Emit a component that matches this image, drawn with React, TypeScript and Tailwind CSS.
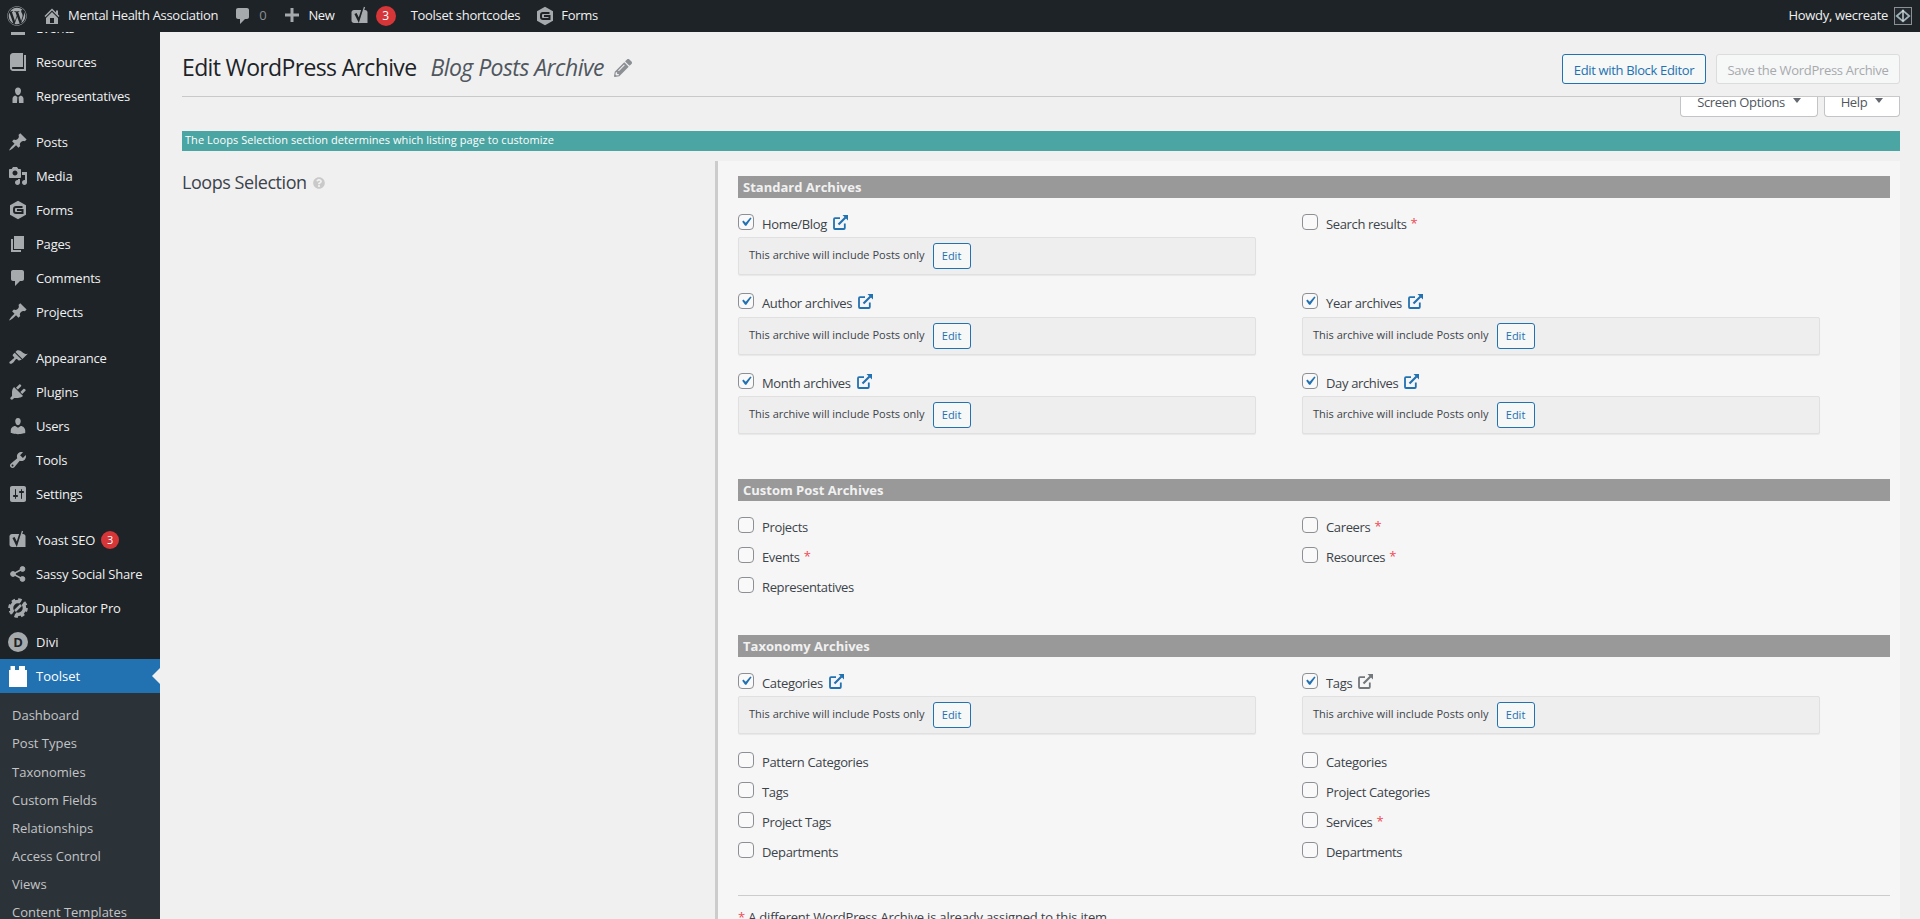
import type { ReactNode } from "react";
import { FaPencilAlt, FaQuestionCircle, FaWordpress } from "react-icons/fa";

type IconProps = { className?: string };

const dash = (d: string) =>
  function DashIcon({ className }: IconProps) {
    return (
      <svg viewBox="0 0 20 20" fill="currentColor" className={className}>
        <path d={d} />
      </svg>
    );
  };

const PinIcon = dash("M10.44 3.02l1.82-1.82 6.36 6.35-1.83 1.82c-1.05-.68-2.48-.57-3.41.36l-.75.75c-.92.93-1.04 2.35-.35 3.41l-1.83 1.82-2.41-2.41-2.8 2.79c-.42.42-3.38 2.71-3.8 2.29s1.86-3.39 2.28-3.81l2.79-2.79L4.1 9.36l1.83-1.82c1.05.69 2.48.57 3.4-.36l.75-.75c.93-.92 1.05-2.35.36-3.41z");
const CommentIcon = dash("M5 2h9c1.1 0 2 .9 2 2v7c0 1.1-.9 2-2 2h-2l-5 5v-5H5c-1.1 0-2-.9-2-2V4c0-1.1.9-2 2-2z");
const UsersIcon = dash("M10 9.25c-2.27 0-2.73-3.44-2.73-3.44C7 4.02 7.82 2 9.97 2c2.16 0 2.98 2.02 2.71 3.81 0 0-.41 3.44-2.68 3.44zm0 2.57L12.72 10c2.39 0 4.52 2.33 4.52 4.53v2.49s-3.65 1.13-7.24 1.13c-3.65 0-7.24-1.13-7.24-1.13v-2.49c0-2.25 1.94-4.48 4.47-4.48z");
const ToolsIcon = dash("M16.68 9.77c-1.34 1.34-3.3 1.67-4.95.99l-5.41 6.52c-.99.99-2.59.99-3.58 0s-.99-2.59 0-3.57l6.52-5.42c-.68-1.65-.35-3.61.99-4.95 1.28-1.28 3.12-1.62 4.72-1.06l-2.89 2.89 2.82 2.82 2.86-2.87c.53 1.58.18 3.39-1.08 4.67zM3.81 16.21c.4.39 1.04.39 1.43 0 .4-.4.4-1.04 0-1.43-.39-.4-1.03-.4-1.43 0-.39.39-.39 1.03 0 1.43z");
const PluginIcon = dash("M13.11 4.36L9.87 7.6 8 5.73l3.24-3.24c.35-.34 1.05-.2 1.56.32.52.51.66 1.21.31 1.55zm-8 1.77l.91-1.12 9.01 9.01-1.19.84c-.71.71-2.63 1.16-3.82 1.16H6.14L4.9 17.26c-.59.59-1.54.59-2.12 0-.59-.58-.59-1.53 0-2.12l1.24-1.24v-3.88c0-1.13.4-3.19 1.09-3.89zm7.26 3.97l3.24-3.24c.34-.35 1.04-.21 1.55.31.52.51.66 1.21.31 1.55l-3.24 3.25z");
const BrushIcon = dash("M14.48 11.06L7.41 3.99l1.5-1.5c.5-.56 2.3-.47 3.51.32 1.21.8 1.43 1.28 2.91 2.1 1.18.64 2.45 1.26 4.45.85zm-.71.71L6.7 4.7 4.93 6.47c-.39.39-.39 1.02 0 1.41l1.06 1.06c.39.39.39 1.03 0 1.42-.6.6-1.43 1.11-2.21 1.69-.35.26-.7.53-1.01.84C1.43 13.23.91 14.6 1.76 15.45s2.21.33 3.55-1.01c.31-.31.58-.66.85-1.02.58-.78 1.08-1.6 1.69-2.21.39-.39 1.02-.39 1.41 0l1.06 1.06c.39.39 1.02.39 1.41 0z");
const HomeIcon = dash("M16 8.5l1.53 1.53-1.06 1.06L10 4.62l-6.47 6.47-1.06-1.06L10 2.5l4 4v-2h2v4zm-6-2.46l6 5.99V18H4v-5.97zM12 17v-5H8v5h4z");
const PageIcon = dash("M6 15V2h10v13H6zm-1 1h8v2H3V5h2v11z");
const MediaIcon = dash("M13 11V4c0-.55-.45-1-1-1h-1.67L9 1H5L3.67 3H2c-.55 0-1 .45-1 1v7c0 .55.45 1 1 1h10c.55 0 1-.45 1-1zM7 4.5c1.38 0 2.5 1.12 2.5 2.5S8.38 9.5 7 9.5 4.5 8.38 4.5 7 5.62 4.5 7 4.5zM14 6h5v10.5c0 1.38-1.12 2.5-2.5 2.5S14 17.88 14 16.5s1.12-2.5 2.5-2.5c.17 0 .34.02.5.05V9h-3V6zm-4 8.05V13h2v3.5c0 1.38-1.12 2.5-2.5 2.5S7 17.88 7 16.5 8.12 14 9.5 14c.17 0 .34.02.5.05z");
const SettingsIcon = dash("M18 16V4c0-1.1-.9-2-2-2H4c-1.1 0-2 .9-2 2v12c0 1.1.9 2 2 2h12c1.1 0 2-.9 2-2zM8 11h1c.55 0 1 .45 1 1s-.45 1-1 1H8v1.5c0 .28-.22.5-.5.5s-.5-.22-.5-.5V13H6c-.55 0-1-.45-1-1s.45-1 1-1h1V5.5c0-.28.22-.5.5-.5s.5.22.5.5V11zm5-2h-1c-.55 0-1-.45-1-1s.45-1 1-1h1V5.5c0-.28.22-.5.5-.5s.5.22.5.5V7h1c.55 0 1 .45 1 1s-.45 1-1 1h-1v5.5c0 .28-.22.5-.5.5s-.5-.22-.5-.5V9z");
const PlusIcon = dash("M17 7.5v3h-5.5V16h-3v-5.5H3v-3h5.5V2h3v5.5H17z");
const BookIcon = dash("M16 3h2v16H5c-1.66 0-3-1.34-3-3V4c0-1.66 1.34-3 3-3h10v14H5c-.55 0-1 .45-1 1s.45 1 1 1h11V3z");
const ManIcon = dash("M10 1.5c1.9 0 3 1.4 3 3.3 0 2.1-1.2 4.4-3 4.4S7 6.900 7 4.800C7 2.900 8.100 1.500 10 1.500zM7.200 9.500L9.400 11l-.4 6H4.500v-4.300c0-1.500 1.100-2.700 2.700-3.200zm5.600 0c1.600.5 2.700 1.700 2.700 3.200V17H11l-.4-6 2.200-1.500z");
const CalendarIcon = dash("M3 5h14v12H3zM5 8v2h2V8zm4 0v2h2V8zm4 0v2h2V8zm-8 4v2h2v-2zm4 0v2h2v-2zm4 0v2h2v-2z");

function YoastIcon({ className }: IconProps) {
  return (
    <svg viewBox="0 0 20 20" className={className}>
      <path fill="currentColor" d="M4 4h11c1.500 0 2.500 1 2.500 2.500V17H4c-1.500 0-2.500-1-2.500-2.500v-8C1.500 5 2.500 4 4 4z" />
      <path fill="none" stroke="#1d2327" strokeWidth="2.400" d="M5.500 7.500l3.500 7 4-12.500" />
      <path fill="none" stroke="currentColor" strokeWidth="1.300" d="M14.500 1L9.500 17" />
    </svg>
  );
}

function FormsIcon({ className }: IconProps) {
  return (
    <svg viewBox="0 0 20 20" className={className}>
      <path fill="currentColor" d="M10 .8l8 4.500v9.400l-8 4.500-8-4.500V5.300z" />
      <path fill="none" stroke="#1d2327" strokeWidth="2" d="M14.500 7H8c-1.200 0-2 .8-2 2v2c0 1.200.8 2 2 2h6.500v-3H9" />
    </svg>
  );
}

function ShareIcon({ className }: IconProps) {
  return (
    <svg viewBox="0 0 20 20" className={className}>
      <g fill="currentColor" stroke="currentColor">
        <circle cx="5" cy="10" r="2.400" />
        <circle cx="14.500" cy="5" r="2.400" />
        <circle cx="14.500" cy="15" r="2.400" />
        <path strokeWidth="1.500" fill="none" d="M14.500 5L5 10l9.500 5" />
      </g>
    </svg>
  );
}

function DuplicatorIcon({ className }: IconProps) {
  return (
    <svg viewBox="0 0 20 20" className={className}>
      <circle cx="10" cy="10" r="8.300" fill="none" stroke="currentColor" strokeWidth="3" strokeDasharray="3.500 3" />
      <circle cx="10" cy="10" r="6.500" fill="none" stroke="currentColor" strokeWidth="3.500" />
      <path d="M15 3L5 17" stroke="#1d2327" strokeWidth="2.500" />
      <path d="M13 7L7 13" stroke="currentColor" strokeWidth="2.500" />
    </svg>
  );
}

function ToolsetIcon({ className }: IconProps) {
  return (
    <svg viewBox="0 0 18 21" fill="currentColor" className={className}>
      <path d="M0 4h1.500V0H6v4h4V0h6v4h2v17H0z" />
    </svg>
  );
}

function ExternalIcon({ className }: IconProps) {
  return (
    <svg viewBox="0 0 15 15" fill="none" stroke="currentColor" className={className}>
      <path strokeWidth="1.800" d="M7 3.200H2c-.6 0-1 .4-1 1V13c0 .6.4 1 1 1h8.800c.6 0 1-.4 1-1V8.500" />
      <path strokeWidth="2.200" d="M5.500 9.500L12.500 2.500" />
      <path fill="currentColor" stroke="none" d="M9.500 0H15v5.500z" />
    </svg>
  );
}

function Avatar() {
  return (
    <svg viewBox="0 0 18 18" className="h-[18px] w-[18px] border border-[#8c8f94] bg-[#23292e]">
      <path d="M2 9l7-6 7 6-7 6z" fill="none" stroke="#9fb4b8" strokeWidth="2" />
      <path d="M9 2v13" stroke="#dbe5e6" strokeWidth="1.500" />
    </svg>
  );
}

function CheckBox({ checked }: { checked?: boolean }) {
  return (
    <span className="flex h-4 w-4 shrink-0 items-center justify-center rounded-[4px] border border-[#8c8f94] bg-[#f9f9f9]">
      {checked && (
        <svg viewBox="0 0 20 20" className="h-[18px] w-[18px] shrink-0 text-[#2271b1]" fill="currentColor">
          <path d="M14.830 4.890l1.340.940-5.810 8.380H9.020L5.780 9.670l1.340-1.250 2.570 2.400z" />
        </svg>
      )}
    </span>
  );
}

function Archive({
  label,
  checked,
  link,
  grayLink,
  star,
  box,
  boxGap = "mt-[7px]",
}: {
  label: string;
  checked?: boolean;
  link?: boolean;
  grayLink?: boolean;
  star?: boolean;
  box?: boolean;
  boxGap?: string;
}) {
  return (
    <div>
      <div className="flex h-4 items-center text-[13px] text-[#3c434a]">
        <CheckBox checked={checked} />
        <span className="ml-2 mt-[5px] whitespace-nowrap tracking-[-0.35px]">{label}</span>
        {star && <span className="ml-[4px] mt-[4px] text-[#ef4a55]">*</span>}
        {link && <ExternalIcon className="ml-[6px] h-[15px] w-[15px] text-[#2271b1]" />}
        {grayLink && <ExternalIcon className="ml-[6px] h-[15px] w-[15px] text-[#72777c]" />}
      </div>
      {box && (
        <div className={`${boxGap} flex h-[38px] w-[518px] items-center gap-[8px] rounded-[2px] border border-[#e0e0e0] bg-[#eeeeee] pl-[10px] shadow-[0_1px_1px_rgba(0,0,0,0.06)]`}>
          <span className="-mt-[2px] whitespace-nowrap text-[11px] text-[#3c434a]">This archive will include Posts only</span>
          <button className="h-[26px] w-[38px] rounded-[3px] border border-[#2271b1] bg-[#f6f7f7] pt-[1px] text-[11px] text-[#2271b1]">
            Edit
          </button>
        </div>
      )}
    </div>
  );
}

function Row({ children, className = "" }: { children: ReactNode; className?: string }) {
  return <div className={`grid grid-cols-[564px_1fr] ${className}`}>{children}</div>;
}

function SectionBar({ title, className = "" }: { title: string; className?: string }) {
  return (
    <div className={`flex h-[22px] items-center bg-[#999999] pl-[5px] pt-[2px] text-[13px] font-bold text-[#f1f1f1] ${className}`}>
      {title}
    </div>
  );
}

function MenuItem({ icon: Icon, label, badge, className = "" }: { icon: (p: IconProps) => ReactNode; label: string; badge?: string; className?: string }) {
  return (
    <div className={`flex h-[34px] items-center text-[13px] text-[#f0f0f1] ${className}`}>
      <span className="flex w-9 shrink-0 justify-center text-[#a7aaad]">
        <Icon className="h-5 w-5" />
      </span>
      <span className="mt-[2px] whitespace-nowrap tracking-[-0.2px]">{label}</span>
      {badge && (
        <span className="ml-[6px] flex h-[18px] w-[18px] items-center justify-center rounded-full bg-[#d63638] text-[11px] text-white">
          {badge}
        </span>
      )}
    </div>
  );
}

const SUBMENU = ["Dashboard", "Post Types", "Taxonomies", "Custom Fields", "Relationships", "Access Control", "Views", "Content Templates"];

export default function App() {
  return (
    <div className="flex h-screen flex-col overflow-hidden bg-[#f0f0f1] font-['Open_Sans',sans-serif] text-[13px]">
      {/* Admin bar */}
      <div className="relative z-10 flex h-8 shrink-0 items-center bg-[#1d2327] text-[13px] tracking-[-0.3px] text-[#f0f0f1]">
        <FaWordpress className="ml-[7px] h-5 w-5 text-[#a7aaad]" />
        <HomeIcon className="ml-[15px] h-5 w-5 text-[#a7aaad]" />
        <span className="ml-[6px] whitespace-nowrap">Mental Health Association</span>
        <CommentIcon className="ml-[15px] h-5 w-5 text-[#a7aaad]" />
        <span className="ml-[6px] text-[#8c8f94]">0</span>
        <PlusIcon className="ml-[16px] h-5 w-5 text-[#a7aaad]" />
        <span className="ml-[6px]">New</span>
        <YoastIcon className="ml-[15px] h-5 w-5 text-[#a7aaad]" />
        <span className="ml-[6px] flex h-5 w-5 items-center justify-center rounded-full bg-[#d63638] text-[12px] text-white">3</span>
        <span className="ml-[15px] whitespace-nowrap">Toolset shortcodes</span>
        <FormsIcon className="ml-[15px] h-5 w-5 text-[#a7aaad]" />
        <span className="ml-[6px]">Forms</span>
        <span className="ml-auto whitespace-nowrap">Howdy, wecreate</span>
        <span className="ml-[6px] mr-2">
          <Avatar />
        </span>
      </div>

      <div className="flex min-h-0 flex-1">
        {/* Sidebar, scrolled so that the first item sits under the admin bar */}
        <div className="w-40 shrink-0 overflow-hidden bg-[#1d2327]">
          <div className="-mt-[21px]">
            <MenuItem icon={CalendarIcon} label="Events" />
            <MenuItem icon={BookIcon} label="Resources" />
            <MenuItem icon={ManIcon} label="Representatives" />
            <MenuItem icon={PinIcon} label="Posts" className="mt-3" />
            <MenuItem icon={MediaIcon} label="Media" />
            <MenuItem icon={FormsIcon} label="Forms" />
            <MenuItem icon={PageIcon} label="Pages" />
            <MenuItem icon={CommentIcon} label="Comments" />
            <MenuItem icon={PinIcon} label="Projects" />
            <MenuItem icon={BrushIcon} label="Appearance" className="mt-3" />
            <MenuItem icon={PluginIcon} label="Plugins" />
            <MenuItem icon={UsersIcon} label="Users" />
            <MenuItem icon={ToolsIcon} label="Tools" />
            <MenuItem icon={SettingsIcon} label="Settings" />
            <MenuItem icon={YoastIcon} label="Yoast SEO" badge="3" className="mt-3" />
            <MenuItem icon={ShareIcon} label="Sassy Social Share" />
            <MenuItem icon={DuplicatorIcon} label="Duplicator Pro" />
            <div className="flex h-[34px] items-center text-[13px] text-[#f0f0f1]">
              <span className="flex w-9 shrink-0 justify-center">
                <span className="flex h-5 w-5 items-center justify-center rounded-full bg-[#a7aaad] text-[13px] font-bold leading-none text-[#1d2327]">D</span>
              </span>
              <span className="mt-[2px]">Divi</span>
            </div>
            <div className="relative flex h-[34px] items-center bg-[#2271b1] text-[13px] text-white">
              <span className="flex w-9 shrink-0 justify-center">
                <ToolsetIcon className="h-[21px] w-[18px] text-white" />
              </span>
              <span className="mt-[2px]">Toolset</span>
              <span className="absolute right-0 top-[9px] h-0 w-0 border-y-[8px] border-r-[8px] border-y-transparent border-r-[#f0f0f1]" />
            </div>
            <div className="bg-[#2c3338] pb-2 pt-[9px]">
              {SUBMENU.map((s) => (
                <div key={s} className="flex h-[28.15px] items-center pl-3 text-[13px] text-[#c3c4c7]">
                  {s}
                </div>
              ))}
            </div>
          </div>
        </div>

        {/* Main */}
        <div className="min-w-0 flex-1 pl-[22px] pr-5 pt-[22px]">
          <div className="flex h-[43px] items-start justify-between border-b border-[#c9c9c9]">
            <div className="flex h-[26px] items-center">
              <h1 className="text-[23px] font-normal leading-none tracking-[-0.65px] text-[#1d2327]">Edit WordPress Archive</h1>
              <span className="ml-[14px] text-[23px] italic leading-none tracking-[-0.55px] text-[#50575e]">Blog Posts Archive</span>
              <FaPencilAlt className="ml-[10px] mt-[2px] h-[18px] w-[18px] text-[#8c8f94]" />
            </div>
            <div className="flex gap-[10px]">
              <button className="h-[30px] w-[144px] rounded-[3px] border border-[#2271b1] bg-[#f6f7f7] pt-[3px] text-[13px] tracking-[-0.35px] text-[#2271b1]">
                Edit with Block Editor
              </button>
              <button className="h-[30px] w-[184px] rounded-[3px] border border-[#dcdcde] bg-[#f6f7f7] pt-[3px] text-[13px] tracking-[-0.3px] text-[#a7aaad]">
                Save the WordPress Archive
              </button>
            </div>
          </div>

          <div className="flex justify-end gap-[6px]">
            {[
              { label: "Screen Options", w: "w-[138px]" },
              { label: "Help", w: "w-[76px]" },
            ].map((t) => (
              <div key={t.label} className={`${t.w} flex h-[20px] items-start justify-center gap-[8px] rounded-b-[4px] border border-t-0 border-[#c3c4c7] bg-white text-[13px] leading-[10px] tracking-[-0.35px] text-[#50575e]`}>
                {t.label}
                <span className="mt-[1px] h-0 w-0 border-x-[4px] border-t-[5px] border-x-transparent border-t-[#646970]" />
              </div>
            ))}
          </div>

          <div className="mt-[14px] flex h-5 items-center bg-[#4ba5a3] pb-[1px] pl-[3px] text-[11px] font-medium tracking-[0.05px] text-white">
            The Loops Selection section determines which listing page to customize
          </div>

          <div className="mt-[10px] flex">
            <div className="w-[533px] shrink-0 pt-[9px]">
              <div className="flex items-center text-[18px] leading-6 tracking-[-0.45px] text-[#3c434a]">
                Loops Selection
                <FaQuestionCircle className="ml-[6px] mt-[2px] h-3 w-3 text-[#c9c9c9]" />
              </div>
            </div>
            <div className="min-w-0 flex-1 border-l-[3px] border-[#cccccc] bg-[#f6f6f6] pl-5 pr-[10px] pt-[15px]">
              <SectionBar title="Standard Archives" />
              <Row className="mt-4">
                <Archive label="Home/Blog" checked link box />
                <Archive label="Search results" star />
              </Row>
              <Row className="mt-[18px]">
                <Archive label="Author archives" checked link box boxGap="mt-[8px]" />
                <Archive label="Year archives" checked link box boxGap="mt-[8px]" />
              </Row>
              <Row className="mt-[18px]">
                <Archive label="Month archives" checked link box />
                <Archive label="Day archives" checked link box />
              </Row>

              <SectionBar title="Custom Post Archives" className="mt-[45px]" />
              <Row className="mt-4">
                <Archive label="Projects" />
                <Archive label="Careers" star />
              </Row>
              <Row className="mt-[14px]">
                <Archive label="Events" star />
                <Archive label="Resources" star />
              </Row>
              <Row className="mt-[14px]">
                <Archive label="Representatives" />
              </Row>

              <SectionBar title="Taxonomy Archives" className="mt-[42px]" />
              <Row className="mt-4">
                <Archive label="Categories" checked link box />
                <Archive label="Tags" checked grayLink box />
              </Row>
              <Row className="mt-[18px]">
                <Archive label="Pattern Categories" />
                <Archive label="Categories" />
              </Row>
              <Row className="mt-[14px]">
                <Archive label="Tags" />
                <Archive label="Project Categories" />
              </Row>
              <Row className="mt-[14px]">
                <Archive label="Project Tags" />
                <Archive label="Services" star />
              </Row>
              <Row className="mt-[14px]">
                <Archive label="Departments" />
                <Archive label="Departments" />
              </Row>

              <div className="mt-[37px] border-t border-[#cccccc] pt-3 text-[13px] tracking-[-0.2px] text-[#3c434a]">
                <span className="text-[#ef4a55]">*</span> A different WordPress Archive is already assigned to this item.
              </div>
            </div>
          </div>
        </div>
      </div>
    </div>
  );
}
